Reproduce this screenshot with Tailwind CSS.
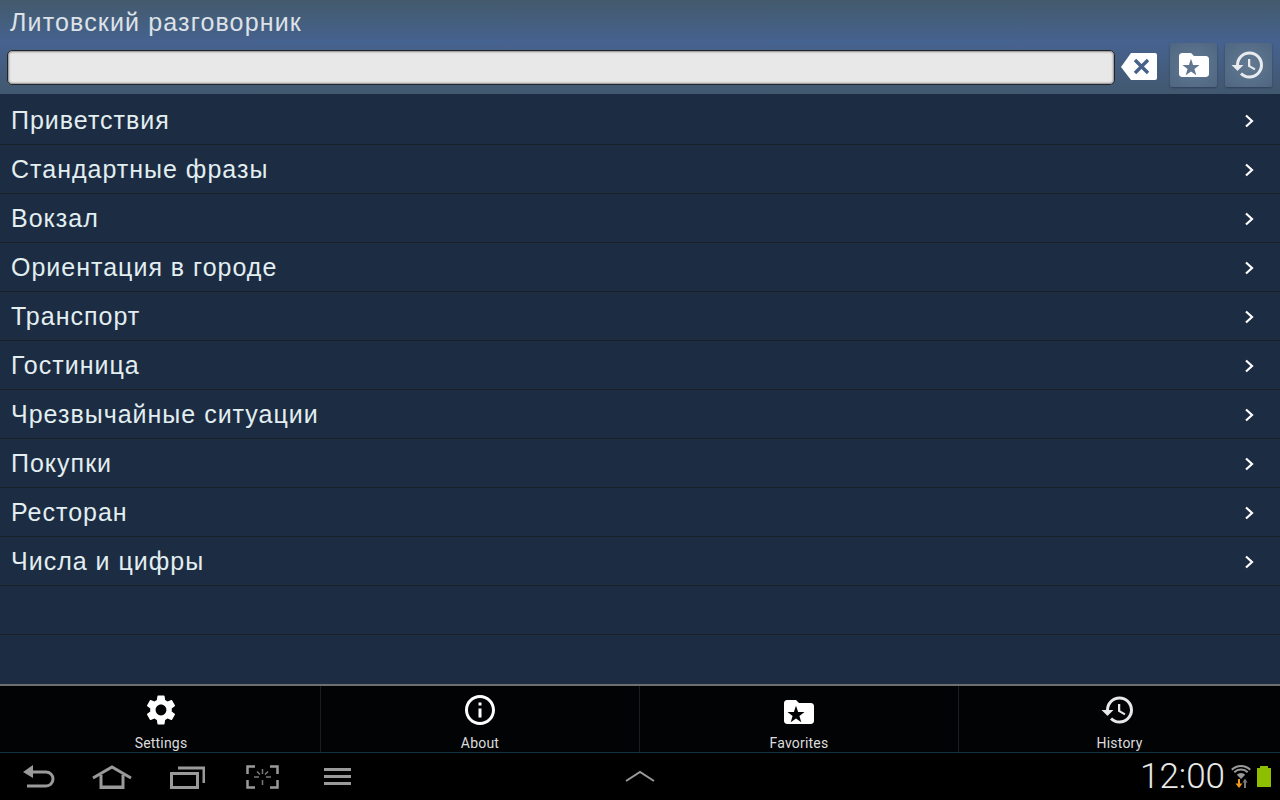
<!DOCTYPE html>
<html lang="ru">
<head>
    <meta charset="UTF-8">
    <meta name="viewport" content="width=device-width, initial-scale=1.0">
    <title>Литовский разговорник</title>
    <script src="https://cdn.jsdelivr.net/npm/@tailwindcss/browser@4"></script>
</head>
<body class="w-[1280px] h-[800px] overflow-hidden bg-black font-['Liberation_Sans',sans-serif]">
    <div class="flex flex-col h-[800px]">
        <!-- action bar -->
        <header class="h-[94px] shrink-0 bg-gradient-to-b from-[#435a6c] via-[#46628f] via-45% to-[#42586f]">
            <h1 class="h-[43px] pl-[10px] pt-[6px] text-[25px] leading-[32px] tracking-[1.15px] text-[#dde2e8] font-normal">Литовский разговорник</h1>
            <div class="flex items-start pl-[7px]">
                <input type="text" class="mt-[7px] w-[1108px] h-[35px] rounded-[5px] bg-[#e8e8e8] border border-[#222528] shadow-[inset_0_0_2px_1px_#8a8a8a]">
                <svg class="mt-[10px] ml-[6px] w-[36px] h-[27px]" viewBox="0 0 36 27">
                    <path fill="#fff" d="M10 0H34a2 2 0 0 1 2 2V25a2 2 0 0 1-2 2H10L0 14Z"/>
                    <path stroke="#46628a" stroke-width="3.4" fill="none" d="M14 7l13 13M27 7l-13 13"/>
                </svg>
                <button class="ml-[13px] w-[47px] h-[44px] flex items-center justify-center rounded-[2px] bg-radial from-[#647a93] to-[#4e6681] shadow-[0_1px_2px_#2f4156]">
                    <svg class="w-[36px] h-[36px]" viewBox="0 0 24 24" fill="#fff" fill-rule="evenodd"><path d="M20 6h-8l-2-2H4c-1.1 0-1.99.9-1.99 2L2 18c0 1.1.9 2 2 2h16c1.1 0 2-.9 2-2V8c0-1.1-.9-2-2-2zM10 7.900 11.410 11.960H15.700L12.280 14.640 13.530 18.750 10 16.300 6.470 18.750 7.720 14.640 4.300 11.960H8.590z"/></svg>
                </button>
                <button class="ml-[8px] w-[47px] h-[44px] flex items-center justify-center rounded-[2px] bg-radial from-[#647a93] to-[#4e6681] shadow-[0_1px_2px_#2f4156]">
                    <svg class="w-[36px] h-[36px] -ml-[2px]" viewBox="0 0 24 24" fill="#e8ebee"><path d="M13 3a9 9 0 0 0-9 9H1l3.89 3.89.07.14L9 12H6c0-3.87 3.13-7 7-7s7 3.13 7 7-3.13 7-7 7c-1.93 0-3.68-.79-4.94-2.06l-1.42 1.42A8.954 8.954 0 0 0 13 21a9 9 0 0 0 0-18zm-1 5v5l4.28 2.54.72-1.21-3.5-2.08V8H12z"/></svg>
                </button>
            </div>
        </header>

        <!-- list -->
        <main class="flex-1 bg-[#1c2c43] pt-[2px]">
            <ul id="list" class="text-[25px] tracking-[1px] text-[#e2eef0]">
                <li class="h-[49px] pt-px flex items-center justify-between pl-[11px] pr-[26px] border-b border-[#1a2029]"><span>Приветствия</span><svg class="w-[10px] h-[14px]" viewBox="0 0 10 14" fill="none" stroke="#fff" stroke-width="2.200"><path d="M2 1.500 8 7 2 12.500"/></svg></li>
                <li class="h-[49px] pt-px flex items-center justify-between pl-[11px] pr-[26px] border-b border-[#1a2029]"><span>Стандартные фразы</span><svg class="w-[10px] h-[14px]" viewBox="0 0 10 14" fill="none" stroke="#fff" stroke-width="2.200"><path d="M2 1.500 8 7 2 12.500"/></svg></li>
                <li class="h-[49px] pt-px flex items-center justify-between pl-[11px] pr-[26px] border-b border-[#1a2029]"><span>Вокзал</span><svg class="w-[10px] h-[14px]" viewBox="0 0 10 14" fill="none" stroke="#fff" stroke-width="2.200"><path d="M2 1.500 8 7 2 12.500"/></svg></li>
                <li class="h-[49px] pt-px flex items-center justify-between pl-[11px] pr-[26px] border-b border-[#1a2029]"><span>Ориентация в городе</span><svg class="w-[10px] h-[14px]" viewBox="0 0 10 14" fill="none" stroke="#fff" stroke-width="2.200"><path d="M2 1.500 8 7 2 12.500"/></svg></li>
                <li class="h-[49px] pt-px flex items-center justify-between pl-[11px] pr-[26px] border-b border-[#1a2029]"><span>Транспорт</span><svg class="w-[10px] h-[14px]" viewBox="0 0 10 14" fill="none" stroke="#fff" stroke-width="2.200"><path d="M2 1.500 8 7 2 12.500"/></svg></li>
                <li class="h-[49px] pt-px flex items-center justify-between pl-[11px] pr-[26px] border-b border-[#1a2029]"><span>Гостиница</span><svg class="w-[10px] h-[14px]" viewBox="0 0 10 14" fill="none" stroke="#fff" stroke-width="2.200"><path d="M2 1.500 8 7 2 12.500"/></svg></li>
                <li class="h-[49px] pt-px flex items-center justify-between pl-[11px] pr-[26px] border-b border-[#1a2029]"><span>Чрезвычайные ситуации</span><svg class="w-[10px] h-[14px]" viewBox="0 0 10 14" fill="none" stroke="#fff" stroke-width="2.200"><path d="M2 1.500 8 7 2 12.500"/></svg></li>
                <li class="h-[49px] pt-px flex items-center justify-between pl-[11px] pr-[26px] border-b border-[#1a2029]"><span>Покупки</span><svg class="w-[10px] h-[14px]" viewBox="0 0 10 14" fill="none" stroke="#fff" stroke-width="2.200"><path d="M2 1.500 8 7 2 12.500"/></svg></li>
                <li class="h-[49px] pt-px flex items-center justify-between pl-[11px] pr-[26px] border-b border-[#1a2029]"><span>Ресторан</span><svg class="w-[10px] h-[14px]" viewBox="0 0 10 14" fill="none" stroke="#fff" stroke-width="2.200"><path d="M2 1.500 8 7 2 12.500"/></svg></li>
                <li class="h-[49px] pt-px flex items-center justify-between pl-[11px] pr-[26px] border-b border-[#1a2029]"><span>Числа и цифры</span><svg class="w-[10px] h-[14px]" viewBox="0 0 10 14" fill="none" stroke="#fff" stroke-width="2.200"><path d="M2 1.500 8 7 2 12.500"/></svg></li>
                <li class="h-[49px] border-b border-[#1a2029]"></li>
            </ul>
        </main>

        <!-- bottom tabs -->
        <nav class="h-[69px] shrink-0 grid grid-cols-[321px_319px_319px_321px] bg-[#020305] border-t-2 border-[#6e6f72] border-b border-b-[#12343f] font-['Roboto',sans-serif] text-[14px] tracking-[0.2px] text-[#dcdcdc]">
            <a class="flex flex-col items-center pl-[2px] border-r border-[#1c1d20]">
                <svg class="mt-[6px] w-[36px] h-[36px]" viewBox="0 0 24 24" fill="#fff"><path d="M19.14 12.94c.04-.3.06-.61.06-.94 0-.32-.02-.64-.07-.94l2.03-1.58a.49.49 0 0 0 .12-.61l-1.92-3.32a.488.488 0 0 0-.59-.22l-2.39.96c-.5-.38-1.03-.7-1.62-.94l-.36-2.54a.484.484 0 0 0-.48-.41h-3.84c-.24 0-.43.17-.47.41l-.36 2.54c-.59.24-1.13.57-1.62.94l-2.39-.96c-.22-.08-.47 0-.59.22L2.74 8.87c-.12.21-.08.47.12.61l2.03 1.58c-.05.3-.09.63-.09.94s.02.64.07.94l-2.03 1.58a.49.49 0 0 0-.12.61l1.92 3.32c.12.22.37.29.59.22l2.39-.96c.5.38 1.03.7 1.62.94l.36 2.54c.05.24.24.41.48.41h3.84c.24 0 .44-.17.47-.41l.36-2.54c.59-.24 1.13-.56 1.62-.94l2.39.96c.22.08.47 0 .59-.22l1.92-3.32c.12-.22.07-.47-.12-.61l-2.01-1.58zM12 15.6c-1.98 0-3.6-1.62-3.6-3.6s1.62-3.6 3.6-3.6 3.6 1.62 3.6 3.6-1.62 3.6-3.6 3.6z"/></svg>
                <span class="mt-[7px] leading-[16px]">Settings</span>
            </a>
            <a class="flex flex-col items-center border-r border-[#1c1d20]">
                <svg class="mt-[6px] w-[36px] h-[36px]" viewBox="0 0 24 24" fill="#fff"><path d="M11 7h2v2h-2zm0 4h2v6h-2zm1-9C6.480 2 2 6.480 2 12s4.480 10 10 10 10-4.480 10-10S17.520 2 12 2zm0 18c-4.410 0-8-3.590-8-8s3.590-8 8-8 8 3.590 8 8-3.590 8-8 8z"/></svg>
                <span class="mt-[7px] leading-[16px]">About</span>
            </a>
            <a class="flex flex-col items-center border-r border-[#1c1d20]">
                <svg class="mt-[8px] w-[36px] h-[36px]" viewBox="0 0 24 24" fill="#fff" fill-rule="evenodd"><path d="M20 6h-8l-2-2H4c-1.1 0-1.99.9-1.99 2L2 18c0 1.1.9 2 2 2h16c1.1 0 2-.9 2-2V8c0-1.1-.9-2-2-2zM10 7.900 11.410 11.960H15.700L12.280 14.640 13.530 18.750 10 16.300 6.470 18.750 7.720 14.640 4.300 11.960H8.590z"/></svg>
                <span class="mt-[5px] leading-[16px]">Favorites</span>
            </a>
            <a class="flex flex-col items-center">
                <svg class="mt-[6px] w-[36px] h-[36px] -ml-[4px]" viewBox="0 0 24 24" fill="#e8e8e8"><path d="M13 3a9 9 0 0 0-9 9H1l3.89 3.89.07.14L9 12H6c0-3.87 3.13-7 7-7s7 3.13 7 7-3.13 7-7 7c-1.93 0-3.68-.79-4.94-2.06l-1.42 1.42A8.954 8.954 0 0 0 13 21a9 9 0 0 0 0-18zm-1 5v5l4.28 2.54.72-1.21-3.5-2.08V8H12z"/></svg>
                <span class="mt-[7px] leading-[16px]">History</span>
            </a>
        </nav>

        <!-- system bar -->
        <footer class="h-[47px] shrink-0 bg-black flex items-center font-['Roboto',sans-serif]">
            <svg class="ml-[22px] w-[33px] h-[24px]" viewBox="0 0 33 24" fill="none" stroke="#9a9a9a" stroke-width="3"><path d="M4 7H24a6.500 6.500 0 0 1 0 14H5"/><path fill="#9a9a9a" stroke="none" d="M11 0V13L1 7Z"/></svg>
            <svg class="ml-[37px] w-[40px] h-[24px]" viewBox="0 0 40 24" fill="none" stroke="#9a9a9a" stroke-width="3"><path d="M1 13 20 2 39 13"/><path d="M9 10V23H31V10M8 22H32"/></svg>
            <svg class="ml-[38px] w-[35px] h-[24px]" viewBox="0 0 35 24" fill="none" stroke="#9a9a9a" stroke-width="3"><path d="M8 3H34V18"/><rect x="1.500" y="8.500" width="26" height="14"/></svg>
            <svg class="ml-[41px] w-[33px] h-[24px]" viewBox="0 0 33 24" fill="none" stroke="#9a9a9a" stroke-width="2.500"><path d="M9 1.500H1.500V9M24 1.500H31.500V9M9 22.500H1.500V15M24 22.500H31.500V15"/><path stroke="#7a7a7a" stroke-width="1.500" d="M16.500 4V9M16.500 15V20M8 12H13M20 12H25M11 6.500 14 9.500M22 6.500 19 9.500"/></svg>
            <svg class="ml-[45px] w-[27px] h-[17px]" viewBox="0 0 27 17" fill="#9a9a9a"><rect width="27" height="3" y="0"/><rect width="27" height="3" y="7"/><rect width="27" height="3" y="14"/></svg>
            <svg class="ml-[274px] w-[30px] h-[12px] -mt-[2px]" viewBox="0 0 30 12" fill="none" stroke="#9a9a9a" stroke-width="2"><path d="M1 11 15 2 29 11"/></svg>
            <span class="ml-auto text-[35px] leading-[40px] font-light text-[#e8e8e8]">12:00</span>
            <svg class="ml-[5px] w-[22px] h-[26px]" viewBox="0 0 22 26" fill="none">
                <path stroke="#9a9a9a" stroke-width="2" d="M1.800 5.800A13 13 0 0 1 20.200 5.800M4.300 8.300A9.500 9.500 0 0 1 17.700 8.300"/>
                <path fill="#9a9a9a" d="M11 15 6.800 10.800A6 6 0 0 1 15.200 10.800z"/>
                <path stroke="#f39a1e" stroke-width="2" d="M9 15V21"/>
                <path fill="#f39a1e" d="M5.500 19.500H12.500L9 24z"/>
                <path stroke="#7a7a7a" stroke-width="2" d="M15 24V18"/>
                <path fill="#7a7a7a" d="M12.500 18.500H17.500L15 14.500z"/>
            </svg>
            <div class="ml-[5px] mr-[9px] flex flex-col items-center">
                <div class="w-[8px] h-[2px] bg-[#8fbe00]"></div>
                <div class="w-[14px] h-[19px] bg-[#8fbe00]"></div>
            </div>
        </footer>
    </div>
</body>
</html>
